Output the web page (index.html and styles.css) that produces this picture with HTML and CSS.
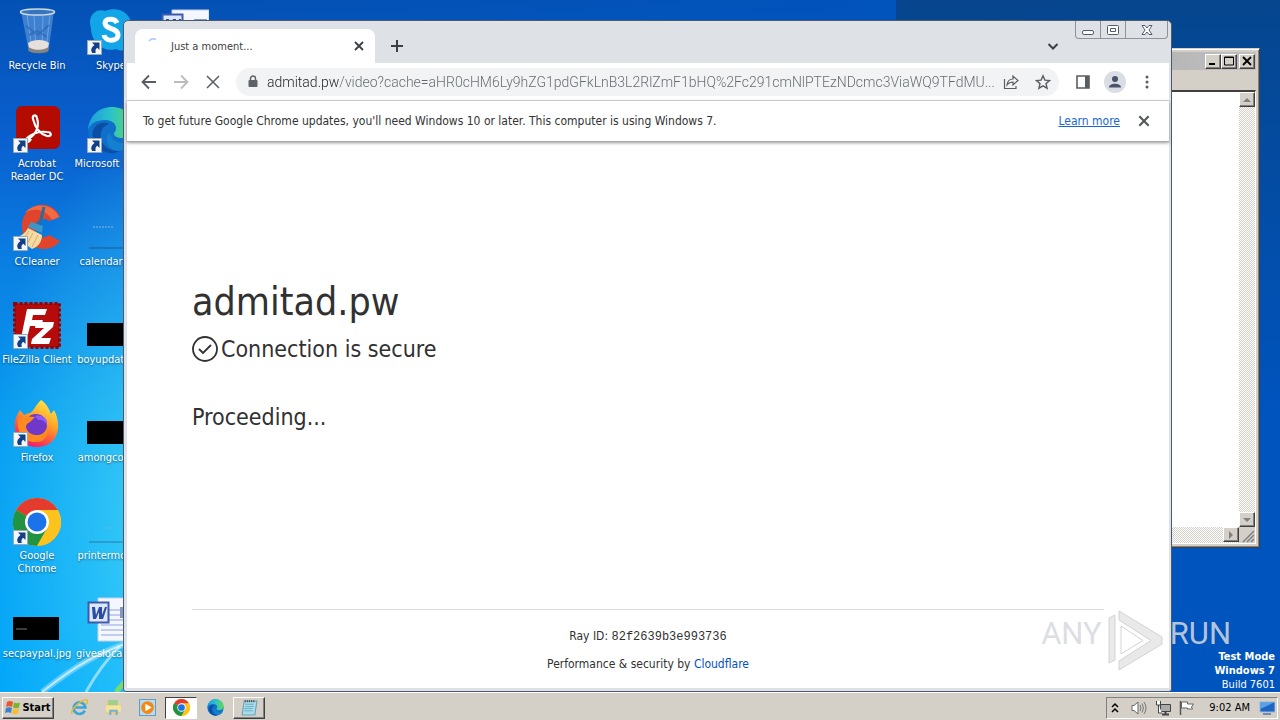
FILE: index.html
```html
<!DOCTYPE html>
<html lang="en">
<head>
    <meta charset="UTF-8">
    <meta name="viewport" content="width=device-width, initial-scale=1.0">
    <title>Just a moment...</title>
    <link rel="stylesheet" href="styles.css">
</head>
<body>
    <!-- shared icons -->
    <svg class="defs" width="0" height="0">
        <symbol id="shortcut" viewBox="0 0 15 15">
            <path d="M.500.500h14v14H.500z" fill="#f3f7fb" stroke="#9aa9b8"/>
            <path d="M5 2.500h7.500V10L10.300 7.800C8.400 9 8.200 10.500 8.700 13H5.300C3.500 10.500 4 7.500 7.500 5z" fill="#123f86"/>
        </symbol>
        <symbol id="chrome" viewBox="0 0 48 48">
            <circle cx="24" cy="24" r="24" fill="#fbc116"/>
            <path d="M24 24 3.200 12A24 24 0 0 1 44.800 12z" fill="#e33b2e"/>
            <path d="M3.200 12A24 24 0 0 0 24 48L34.400 30 24 24z" fill="#229342"/>
            <path d="M24 12h20.800A24 24 0 0 1 24 48l10.400-18z" fill="#fcc31e"/>
            <circle cx="24" cy="24" r="12" fill="#fff"/>
            <circle cx="24" cy="24" r="9.500" fill="#1a73e8"/>
        </symbol>
        <symbol id="edge" viewBox="0 0 48 48">
            <linearGradient id="edge-top"><stop stop-color="#1f9be0"/><stop offset=".5" stop-color="#2bc3c9"/><stop offset="1" stop-color="#62d858"/></linearGradient>
            <circle cx="24" cy="24" r="23" fill="#0f6fc9"/>
            <path d="M1 24C2 10 12 1 25 1c13 0 22 9 22 19 0 8-6 12-12 12-5 0-8-2-8-4s2-2 2-6c0-5-5-8-11-8C9 14 3 18 1 24z" fill="url(#edge-top)"/>
            <path d="M18 20c-6 5-6 14 0 20 4 4 10 6 16 4-5 4-12 4-18 1C5 39 3 27 8 21c4-5 10-5 14-3z" fill="#0b4ea3"/>
            <path d="M23 26c0 6 5 11 12 11 4 0 8-1 10-2-4 8-12 12-18 9-8-3-9-13-4-18z" fill="#1580d0"/>
        </symbol>
        <symbol id="close" viewBox="0 0 12 12">
            <path d="M2 2l8 8M10 2l-8 8" fill="none" stroke="currentColor" stroke-width="1.800"/>
        </symbol>
        <symbol id="word" viewBox="0 0 48 48">
            <path d="M11 2h37v43H11z" fill="#f4f7ff" stroke="#c6d0ea"/>
            <path d="M14 14h32M14 19h32M14 24h32M14 29h32M14 34h32M14 39h32" stroke="#8ca3dc"/>
            <path d="M33 11h13v11H33z" fill="#8796c0"/>
            <path d="M1.500 6.500h20v20h-20z" fill="#dde6fb" stroke="#3d5aab" stroke-width="2"/>
            <path d="M5 11h3l1 8 3-8h3v8l3-8h2l-4 12h-4v-7l-3 7H6z" fill="#2a4b9f"/>
        </symbol>
    </svg>

    <div class="desktop">
        <svg class="beams" viewBox="0 0 240 150" aria-hidden="true">
            <path d="M42 150C75 124 100 108 150 94" stroke="#fff" stroke-width="6" opacity=".3"/>
            <path d="M42 150C75 124 100 108 150 94" stroke="#fff" stroke-width="2" opacity=".6"/>
            <path d="M86 150C96 132 106 118 120 104" stroke="#fff" stroke-width="3" opacity=".5"/>
            <path d="M116 150l14-16" stroke="#8be14e" stroke-width="5" opacity=".8"/>
        </svg>

        <ul class="icons">
            <li>
                <svg class="icon" viewBox="0 0 48 48">
                    <path d="M8 3h33l-5 36c-1 5-20 5-21 0z" fill="#78aee8" opacity=".5"/>
                    <path d="M14 7l5 34M37 7l-4 34M21 8l2 33M30 8l-1 33" stroke="#b5d4f5" opacity=".4"/>
                    <path d="M13 18l12 9 11-10M16 27l8-4 10 6" fill="none" stroke="#2a62ad" stroke-width="2" opacity=".6"/>
                    <path d="M15 35c5-4 17-4 21 0l-1 5c-4 4-15 4-19 0z" fill="#e5e0dc"/>
                    <path d="M15 38c3 5 18 5 21 0l-.500 5c-3 3-16 3-20 0z" fill="#85837f"/>
                    <ellipse cx="24.500" cy="4" rx="17" ry="3" fill="#3974bd" stroke="#ccd9e5" stroke-width="1.500"/>
                </svg>
                <span>Recycle Bin</span>
            </li>
            <li>
                <svg class="icon" viewBox="0 0 48 48">
                    <rect x="3" y="0" width="44" height="43" rx="6" fill="#b30b00"/>
                    <path d="M13 34c9-4 14-12 11-22-1-4-5-3-4 1 2 8 7 15 14 17 5 1 5-4 0-4-8-1-16 2-21 7-3 4 3 4 5 0" fill="none" stroke="#fff" stroke-width="2.200"/>
                    <use href="#shortcut" x="0" y="32" width="15" height="15"/>
                </svg>
                <span>Acrobat Reader DC</span>
            </li>
            <li>
                <svg class="icon" viewBox="0 0 48 48">
                    <path d="M47 13l-11 4c-4-4-13-2-14 6-1 9 8 13 14 8l11 6C36 52 9 45 9 22 9 0 38-8 47 13z" fill="#e0442a"/>
                    <path d="M12 9C20-2 40-1 46 13l-7 3C33 5 21 3 12 9z" fill="#f16a44"/>
                    <path d="M31 3l-5 20" stroke="#246e9d" stroke-width="3"/>
                    <path d="M18 18l12 4-1 7-14-6z" fill="#3d96c8"/>
                    <path d="M15 24l14 7c0 7-4 12-10 14L3 33c6-1 9-4 12-9z" fill="#f5dba2"/>
                    <path d="M16 27l-6 9m10-7-6 11m11-9-6 12" stroke="#d8ae67"/>
                    <use href="#shortcut" x="0" y="32" width="15" height="15"/>
                </svg>
                <span>CCleaner</span>
            </li>
            <li>
                <svg class="icon" viewBox="0 0 48 48">
                    <path d="M1.500 1.500h45v44h-45z" fill="#b60b0b" stroke="#8c0509" stroke-width="3" stroke-dasharray="3 2"/>
                    <path d="M14 7h20l-2 6H20l-1 5h11l-2 6H17l-3 12H8z" fill="#fff"/>
                    <path d="M23 20h18l-1 5-12 11h10l-2 6H18l1-5 12-11h-9z" fill="#fff"/>
                    <use href="#shortcut" x="0" y="32" width="15" height="15"/>
                </svg>
                <span>FileZilla Client</span>
            </li>
            <li>
                <svg class="icon" viewBox="0 0 48 48">
                    <linearGradient id="fox" x1=".8" y1="0" x2=".3" y2="1"><stop stop-color="#fff14c"/><stop offset=".45" stop-color="#ff9a27"/><stop offset=".8" stop-color="#ff3b4d"/><stop offset="1" stop-color="#e9197e"/></linearGradient>
                    <path d="M28 0c6 4 8 9 10 14l3-4c8 15 5 35-15 37C10 48 0 36 2 23c0-5 3-9 5-13l4 5 5-2c4 0 5-6 12-13z" fill="url(#fox)"/>
                    <circle cx="23" cy="25" r="11" fill="#7038c8"/>
                    <path d="M5 20c6-5 11-3 17-3l-5 5c-2 1-4 2-4 5 1 9 17 12 21 1 2 8-3 15-12 14C10 42 4 32 5 20z" fill="#ff8b20"/>
                    <path d="M22 16c8-2 13 3 12 10-2-5-5-7-9-6z" fill="#9059ff"/>
                    <use href="#shortcut" x="0" y="32" width="15" height="15"/>
                </svg>
                <span>Firefox</span>
            </li>
            <li>
                <svg class="icon" viewBox="0 0 48 48">
                    <use href="#chrome" width="48" height="48"/>
                    <use href="#shortcut" x="0" y="32" width="15" height="15"/>
                </svg>
                <span>Google Chrome</span>
            </li>
            <li>
                <svg class="icon" viewBox="0 0 48 48"><path d="M0 21h46v23H0z"/><path d="M3 33h11" stroke="#777"/></svg>
                <span>secpaypal.jpg</span>
            </li>
            <li>
                <svg class="icon" viewBox="0 0 48 48">
                    <path d="M4 20C0 8 9 0 18 3 34-3 48 8 44 25c5 12-6 21-15 16C16 45 4 34 4 20z" fill="#12a5e8"/>
                    <path d="M30 15c-2-5-12-5-12 0 0 7 13 4 13 12 0 7-13 7-14 0" fill="none" stroke="#fff" stroke-width="5"/>
                    <use href="#shortcut" x="0" y="32" width="15" height="15"/>
                </svg>
                <span>Skype</span>
            </li>
            <li>
                <svg class="icon" viewBox="0 0 48 48">
                    <use href="#edge" width="48" height="48"/>
                    <use href="#shortcut" x="0" y="32" width="15" height="15"/>
                </svg>
                <span class="line">Microsoft Edge</span>
            </li>
            <li>
                <svg class="icon" viewBox="0 0 48 48"><path d="M6 23h21" stroke="#82b9e8" stroke-dasharray="2 1"/><path d="M2 44h46" stroke="#185c94"/></svg>
                <span class="line">calendarc.rtf</span>
            </li>
            <li>
                <svg class="icon" viewBox="0 0 48 48"><path d="M0 21h46v23H0z"/></svg>
                <span class="line">boyupdate.rtf</span>
            </li>
            <li>
                <svg class="icon" viewBox="0 0 48 48"><path d="M0 21h46v23H0z"/></svg>
                <span class="line">amongcon.rtf</span>
            </li>
            <li>
                <svg class="icon" viewBox="0 0 48 48"><path d="M16 30h9" stroke="#63b9d9" stroke-dasharray="2 1"/><path d="M2 44h46" stroke="#267da4"/></svg>
                <span class="line">printermo.jpg</span>
            </li>
            <li>
                <svg class="icon" viewBox="0 0 48 48"><use href="#word" width="48" height="48"/></svg>
                <span class="line">giveslocal.doc</span>
            </li>
            <li>
                <svg class="icon" viewBox="0 0 48 48"><use href="#word" width="48" height="48"/></svg>
            </li>
        </ul>

        <div class="build">
            <b>Test Mode</b>
            <b>Windows 7</b>
            <span>Build 7601</span>
        </div>

        <!-- classic window at the back -->
        <section class="notepad">
            <div class="notepad-title">
                <button class="classic" aria-label="Minimize"><svg viewBox="0 0 12 10"><path d="M2 8h6" stroke="#000" stroke-width="2"/></svg></button>
                <button class="classic" aria-label="Maximize"><svg viewBox="0 0 12 10"><path d="M1.500 1v8h9V1zM1 1.500h10" fill="none" stroke="#000"/></svg></button>
                <button class="classic gap" aria-label="Close"><svg viewBox="0 0 12 10"><path d="M2 1l8 8M10 1l-8 8" stroke="#000" stroke-width="1.800"/></svg></button>
            </div>
            <div class="notepad-menu"></div>
            <div class="notepad-client">
                <div class="sheet"></div>
                <div class="scroll vertical">
                    <button class="classic" aria-label="Scroll up"><svg viewBox="0 0 12 10"><path d="M2 7h8L6 3z" fill="#808080"/></svg></button>
                    <button class="classic" aria-label="Scroll down"><svg viewBox="0 0 12 10"><path d="M2 3h8L6 7z" fill="#808080"/></svg></button>
                </div>
                <div class="scroll horizontal">
                    <button class="classic" aria-label="Scroll right"><svg viewBox="0 0 12 10"><path d="M4 1v8l4-4z" fill="#808080"/></svg></button>
                </div>
                <svg class="grip" viewBox="0 0 16 16"><path d="M4 15L15 4M8 15l7-7M12 15l3-3" stroke="#808080" stroke-width="1.500"/></svg>
            </div>
        </section>

        <!-- browser -->
        <section class="browser">
            <div class="caption">
                <button aria-label="Minimize"><svg viewBox="0 0 14 12"><rect x="1.500" y="6.500" width="11" height="4" rx="1.500"/></svg></button>
                <button aria-label="Maximize"><svg viewBox="0 0 14 12"><rect x="1.500" y="1.500" width="11" height="9" rx="1"/><path d="M4.500 4.500h5v3h-5z"/></svg></button>
                <button class="wide" aria-label="Close"><svg viewBox="0 0 14 12"><path d="M2 1.500h3l2 2.500 2-2.500h3L9 6l3 4.500H9L7 8l-2 2.500H2L5 6z"/></svg></button>
            </div>
            <div class="tabs">
                <div class="tab">
                    <svg class="spinner" viewBox="0 0 16 16"><path d="M3 3C5 1 8 .500 10 1.500" fill="none" stroke="#a9c7fa" stroke-width="1.500"/></svg>
                    <span>Just a moment...</span>
                    <button aria-label="Close tab"><svg width="12" height="12"><use href="#close"/></svg></button>
                </div>
                <button class="new-tab" aria-label="New tab"><svg width="14" height="14" viewBox="0 0 14 14"><path d="M7 1v12M1 7h12" stroke="currentColor" stroke-width="2"/></svg></button>
                <button class="tab-search" aria-label="Search tabs"><svg width="12" height="12" viewBox="0 0 12 12"><path d="M1.500 4L6 8.500 10.500 4" fill="none" stroke="currentColor" stroke-width="2"/></svg></button>
            </div>

            <div class="toolbar">
                <button aria-label="Back"><svg width="16" height="16" viewBox="0 0 16 16"><path d="M15 8H2M8 1.500L1.500 8 8 14.500" fill="none" stroke="currentColor" stroke-width="1.800"/></svg></button>
                <button class="off" aria-label="Forward"><svg width="16" height="16" viewBox="0 0 16 16"><path d="M1 8h13M8 1.500L14.500 8 8 14.500" fill="none" stroke="currentColor" stroke-width="1.800"/></svg></button>
                <button aria-label="Stop"><svg width="16" height="16" viewBox="0 0 16 16"><path d="M2 2l12 12M14 2L2 14" stroke="currentColor" stroke-width="1.500"/></svg></button>
                <div class="omnibox">
                    <svg width="12" height="14" viewBox="0 0 12 14"><rect x="1.500" y="5" width="9" height="7" rx="1" fill="#5f6368"/><path d="M3.500 6V3.500a2.500 2.500 0 0 1 5 0V6" fill="none" stroke="#5f6368" stroke-width="1.500"/></svg>
                    <input type="text" aria-label="Address" value="admitad.pw/video?cache=aHR0cHM6Ly9hZG1pdGFkLnB3L2RlZmF1bHQ%2Fc291cmNlPTEzNDcmc3ViaWQ9TFdMU...">
                    <button aria-label="Share"><svg width="16" height="16" viewBox="0 0 16 16"><path d="M1.500 5v9.500H13V12M4 11c.500-4 2.500-6 6-6V2l5 4.500-5 4.500V8C7.500 8 5.500 9 4 11z" fill="none" stroke="currentColor" stroke-width="1.200"/></svg></button>
                    <button aria-label="Bookmark"><svg width="16" height="16" viewBox="0 0 16 16"><path d="M8 1.800l1.900 4.300 4.700.400-3.600 3.100 1.100 4.600L8 11.800l-4.100 2.400L5 9.600 1.400 6.500l4.700-.400z" fill="none" stroke="currentColor" stroke-width="1.400"/></svg></button>
                </div>
                <button aria-label="Side panel"><svg width="16" height="16" viewBox="0 0 16 16"><path d="M2 2h12v12H2z" fill="none" stroke="currentColor" stroke-width="1.600"/><path d="M10 2h4v12h-4z" fill="currentColor"/></svg></button>
                <button class="avatar" aria-label="Profile"><svg width="14" height="14" viewBox="0 0 14 14"><circle cx="7" cy="4" r="3" fill="#4a5168"/><path d="M1 12.500c0-5 12-5 12 0z" fill="#4a5168"/></svg></button>
                <button aria-label="Menu"><svg width="16" height="16" viewBox="0 0 16 16" fill="currentColor"><circle cx="8" cy="3" r="1.500"/><circle cx="8" cy="8" r="1.500"/><circle cx="8" cy="13" r="1.500"/></svg></button>
            </div>

            <div class="infobar">
                <span>To get future Google Chrome updates, you'll need Windows 10 or later. This computer is using Windows 7.</span>
                <a href="#">Learn more</a>
                <button aria-label="Dismiss"><svg width="14" height="14"><use href="#close"/></svg></button>
            </div>

            <div class="page">
                <main>
                    <h1>admitad.pw</h1>
                    <h2>
                        <svg width="26" height="26" viewBox="0 0 26 26"><circle cx="13" cy="13" r="12" fill="none" stroke="#313131" stroke-width="1.800"/><path d="M7 13l4 4 8-8" fill="none" stroke="#313131" stroke-width="1.800"/></svg>
                        <span>Connection is secure</span>
                    </h2>
                    <p>Proceeding...</p>
                </main>
                <footer>
                    <div>Ray ID: <code>82f2639b3e993736</code></div>
                    <div>Performance &amp; security by <a href="#">Cloudflare</a></div>
                </footer>
            </div>
        </section>

        <div class="watermark" aria-hidden="true">
            <span>ANY</span>
            <svg width="60" height="64" viewBox="0 0 60 64">
                <path d="M3 10l6-3v45l-6 3zM13 3l43 26v7L13 62v-9l32-20.500L13 12z" fill="#e9e9e9" stroke="#d3d3d3"/>
                <path d="M15 18v28l22-13.500z" fill="#fff" stroke="#d3d3d3"/>
            </svg>
            <span>RUN</span>
        </div>
    </div>

    <nav class="taskbar">
        <button class="start">
            <svg width="16" height="16" viewBox="0 0 16 16"><path d="M2 2q3-2 6 0L7 7Q4 5.500 1 7z" fill="#e8582a"/><path d="M9 2.500q3 1.500 6 0L14 7.500q-3 1.500-6 0z" fill="#78b52c"/><path d="M1 8q3-1.500 6 0L6 13q-3-1.500-6 0z" fill="#3c80d0"/><path d="M8 8.500q3 1.500 6 0L13 13.500q-3 1.500-6 0z" fill="#f8bd2b"/></svg>
            Start
        </button>
        <div class="tasks">
            <button aria-label="Internet Explorer"><svg viewBox="0 0 16 16"><path d="M13 11A5.500 5.500 0 1 1 13.500 8H4" fill="none" stroke="#3aa5dd" stroke-width="2.500"/><path d="M1 14C-1 10 10 0 15 1c1 1 0 3-1 4" fill="none" stroke="#e8b932" stroke-width="1.500"/></svg></button>
            <button aria-label="Explorer"><svg viewBox="0 0 16 16"><path d="M1 3h5l1 1h7v10H1z" fill="#ecd06f"/><path d="M3 1h9v5H3z" fill="#9fcf8f"/><path d="M1 6h14v6H1z" fill="#f7e39b"/><path d="M4 15v-5h8v5h-2v-3H6v3z" fill="#6fb0df"/></svg></button>
            <button aria-label="Media Player"><svg viewBox="0 0 16 16"><path d="M.500.500h15v15H.500z" fill="#b9dcf5" stroke="#669cc7"/><circle cx="8" cy="8" r="6" fill="#f28a12"/><path d="M6 4.500v7L12 8z" fill="#fff"/></svg></button>
            <button class="active" aria-label="Google Chrome"><svg viewBox="0 0 48 48"><use href="#chrome"/></svg></button>
            <button aria-label="Microsoft Edge"><svg viewBox="0 0 48 48"><use href="#edge"/></svg></button>
            <button class="open" aria-label="Notepad"><svg viewBox="0 0 16 16"><path d="M3 2h12l-2 13H1z" fill="#a9dbe8" stroke="#6ba2b4"/><path d="M4 5h8M4 7h8M3 9h8M3 11h8" stroke="#6cb4c8"/><path d="M4 1v2m2-2v2m2-2v2m2-2v2m2-2v2" stroke="#555"/></svg></button>
        </div>
        <div class="tray">
            <svg viewBox="0 0 16 16"><path d="M5 7l3-3 3 3M5 12l3-3 3 3" fill="none" stroke="#000" stroke-width="1.500"/></svg>
            <svg viewBox="0 0 16 16"><path d="M1 5.500h2L7 2v12l-4-3.500H1z" fill="#fff" stroke="#666"/><path d="M9 5q2 3 0 6M11 3.500q3 4.500 0 9M13 2q4 6 0 12" fill="none" stroke="#777"/></svg>
            <svg viewBox="0 0 16 16"><path d="M5.500 4.500h10v7h-10z" fill="#aaa" stroke="#444"/><path d="M7 14.500h7M10.500 12v2" stroke="#444" stroke-width="2"/><path d="M1.500 1v4h4V1M3.500 5v8H7" fill="#fff" stroke="#444"/></svg>
            <svg viewBox="0 0 16 16"><path d="M1.500 1v14" stroke="#555" stroke-width="1.500"/><path d="M2.500 2h6v2h6l-2 3 1 2H8.500V8h-6z" fill="#fff" stroke="#666"/></svg>
            <time>9:02 AM</time>
            <svg viewBox="0 0 16 16"><path d="M1 2h15v10H1z" fill="#1e65c4" stroke="#9db7d5"/><path d="M1 2h15L1 9z" fill="#5da2e6"/><path d="M4 14h8" stroke="#758aa8" stroke-width="2"/></svg>
        </div>
    </nav>
</body>
</html>
```
FILE: styles.css
```css
* {
    box-sizing: border-box;
}

body {
    margin: 0;
    height: 100vh;
    display: flex;
    flex-direction: column;
    overflow: hidden;
    font-family: "DejaVu Sans Condensed", "Noto Sans", sans-serif;
    font-size: 11px;
    color: #333;
}

button {
    display: flex;
    align-items: center;
    justify-content: center;
    padding: 0;
    border: 0;
    background: none;
    font: inherit;
    color: inherit;
}

svg {
    flex: none;
}

.defs {
    position: absolute;
}

/* desktop */
.desktop {
    flex: 1;
    min-height: 0;
    position: relative;
    overflow: hidden;
    background:
        radial-gradient(ellipse 200px 400px at 180px 520px, rgba(80, 225, 250, 0.8), rgba(80, 220, 250, 0) 100%),
        linear-gradient(180deg, rgba(10, 60, 110, 0.6), rgba(0, 60, 130, 0) 60%) right / 30% 100% no-repeat,
        linear-gradient(90deg, rgba(0, 80, 185, 0) 15%, rgba(0, 84, 190, 1) 85%),
        linear-gradient(180deg, #0451b4 0%, #0a60cf 20%, #0a82e4 40%, #059bf0 62%, #02a7fa 100%);
}

.beams {
    position: absolute;
    left: 0;
    bottom: 0;
    width: 240px;
    height: 150px;
    fill: none;
}

.icons {
    display: grid;
    grid-auto-flow: column;
    grid-template-rows: repeat(7, 98px);
    grid-auto-columns: 74px;
    width: 232px;
    margin: 0;
    padding: 8px 0 0;
    list-style: none;
}

.icons li {
    display: flex;
    flex-direction: column;
    align-items: center;
    gap: 3px;
    line-height: 13px;
    color: #fff;
    text-align: center;
    text-shadow: 0 1px 2px rgba(0, 0, 0, 0.5);
}

.icon {
    width: 48px;
    height: 48px;
}

.line {
    white-space: nowrap;
}

.build {
    position: absolute;
    right: 5px;
    bottom: 0;
    display: flex;
    flex-direction: column;
    line-height: 14px;
    text-align: right;
    color: #fff;
}

/* classic window */
.notepad {
    position: absolute;
    top: 48px;
    right: 20px;
    bottom: 144px;
    width: 600px;
    display: flex;
    flex-direction: column;
    padding: 3px;
    background: #d4d0c8;
    border: 1px solid #d4d0c8;
    border-right-color: #404040;
    border-bottom-color: #404040;
    box-shadow: inset 1px 1px #fff, inset -1px -1px #808080;
}

.notepad-title {
    display: flex;
    align-items: center;
    justify-content: flex-end;
    height: 18px;
    padding-right: 1px;
    background: linear-gradient(90deg, #808080, #c0c0c0);
}

.notepad-menu {
    height: 20px;
}

.classic {
    width: 16px;
    height: 15px;
    background: #d4d0c8;
    border: 1px solid #fff;
    border-right-color: #404040;
    border-bottom-color: #404040;
    box-shadow: inset -1px -1px #808080;
}

.classic svg {
    width: 12px;
    height: 10px;
}

.gap {
    margin-left: 2px;
}

.notepad-client {
    flex: 1;
    display: grid;
    grid-template-columns: 1fr 16px;
    grid-template-rows: 1fr 16px;
    border: 1px solid #fff;
    border-top: 2px solid #404040;
}

.sheet {
    background: #fff;
}

.scroll {
    display: flex;
    background: repeating-conic-gradient(#fff 0 25%, #d4d0c8 0 50%) 0 0 / 2px 2px;
}

.scroll.vertical {
    flex-direction: column;
    justify-content: space-between;
}

.scroll.horizontal {
    justify-content: flex-end;
}

/* browser window */
.browser {
    position: absolute;
    top: 20px;
    left: 123px;
    right: 108px;
    bottom: 0;
    display: flex;
    flex-direction: column;
    padding: 0 2px 3px 3px;
    background: #dee1e6;
    border: 1px solid #4d5a6b;
    border-radius: 5px 5px 3px 3px;
}

.caption {
    position: absolute;
    top: 0;
    right: 3px;
    display: flex;
    height: 18px;
    border: 1px solid #8d939c;
    border-top: 0;
    border-radius: 0 0 4px 4px;
}

.caption button {
    width: 25px;
    border-right: 1px solid #8d939c;
}

.caption .wide {
    width: 41px;
    border-right: 0;
}

.caption svg {
    width: 14px;
    height: 12px;
    fill: #fff;
    stroke: #545b68;
}

.tabs {
    display: flex;
    align-items: flex-end;
    height: 42px;
    padding: 0 8px;
    color: #3c4043;
}

.tab {
    display: flex;
    align-items: center;
    gap: 9px;
    width: 240px;
    height: 34px;
    padding: 0 10px 0 11px;
    background: #fff;
    border-radius: 8px 8px 0 0;
}

.tab span {
    flex: 1;
}

.spinner {
    width: 16px;
    height: 16px;
}

.new-tab {
    width: 28px;
    height: 34px;
    margin-left: 8px;
}

.tab-search {
    width: 28px;
    height: 34px;
    margin-left: auto;
    margin-right: 94px;
}

.toolbar {
    display: flex;
    align-items: center;
    gap: 8px;
    height: 38px;
    padding: 0 10px;
    background: #fff;
    border-bottom: 1px solid #d5d7db;
    color: #5a5d62;
}

.toolbar button {
    width: 24px;
    height: 24px;
}

.toolbar .off {
    color: #babcbe;
}

.omnibox {
    flex: 1;
    display: flex;
    align-items: center;
    height: 28px;
    margin-left: 3px;
    margin-right: 4px;
    padding: 0 4px 0 11px;
    background: #f1f3f4;
    border-radius: 14px;
}

.omnibox input {
    flex: 1;
    min-width: 0;
    margin-left: 8px;
    padding: 0;
    border: 0;
    outline: 0;
    font-family: Roboto, sans-serif;
    font-size: 14px;
    font-weight: 300;
    /* host name dark, the rest of the address grey */
    background: linear-gradient(90deg, #202124 72px, #63676b 72px);
    -webkit-background-clip: text;
    background-clip: text;
    color: transparent;
}

.omnibox button + button {
    margin-left: 8px;
}

.toolbar .avatar {
    width: 22px;
    height: 22px;
    margin: 0 1px;
    border-radius: 50%;
    background: #dadde3;
}

.infobar {
    display: flex;
    align-items: center;
    height: 41px;
    padding: 0 16px;
    background: #fff;
    border-bottom: 1px solid #aaa;
    box-shadow: 0 1px 3px rgba(0, 0, 0, 0.4);
    font-size: 12px;
    z-index: 1;
}

.infobar span {
    flex: 1;
}

.infobar a {
    color: #1a67c9;
}

.infobar button {
    width: 18px;
    margin-left: 15px;
    color: #54575c;
}

.page {
    flex: 1;
    min-height: 0;
    display: flex;
    flex-direction: column;
    padding: 0 65px;
    background: #fff;
    color: #313131;
}

.page main {
    flex: 1;
    padding-top: 130px;
}

.page h1,
.page h2,
.page p {
    margin: 0;
    font-weight: 400;
}

.page h1 {
    font-size: 39px;
    line-height: 59px;
}

.page h2 {
    display: flex;
    align-items: center;
    gap: 3px;
    margin-bottom: 32px;
    font-size: 23px;
    line-height: 36px;
}

.page p {
    font-size: 23px;
    line-height: 36px;
}

.page footer {
    padding: 17px 0 15px;
    border-top: 1px solid #d9d9d9;
    font-size: 12px;
    line-height: 18px;
    text-align: center;
}

.page footer div + div {
    margin-top: 9px;
}

.page code {
    font-family: "Liberation Mono", monospace;
    font-size: 12px;
}

.page footer a {
    color: #0051c3;
    text-decoration: none;
}

.watermark {
    position: absolute;
    right: 49px;
    bottom: 20px;
    display: flex;
    align-items: center;
    gap: 4px;
    font-family: Roboto, sans-serif;
    font-size: 31px;
    line-height: 24px;
    color: rgba(214, 217, 222, 0.85);
    pointer-events: none;
}

.watermark span {
    padding-bottom: 12px;
}

/* taskbar */
.taskbar {
    display: flex;
    align-items: center;
    height: 28px;
    padding: 2px 2px 0;
    background: #d4d0c8;
    border-top: 1px solid #fff;
    color: #000;
}

.start,
.open {
    border: 1px solid #fff;
    border-right-color: #404040;
    border-bottom-color: #404040;
    box-shadow: inset -1px -1px #808080;
}

.start {
    width: 52px;
    height: 22px;
    gap: 1px;
    font-weight: 700;
}

.tasks {
    display: flex;
    align-items: center;
    gap: 2px;
    margin-left: 9px;
}

.tasks button {
    width: 32px;
    height: 22px;
}

.tasks svg {
    width: 17px;
    height: 17px;
}

.tasks .active {
    background: #fff;
    border: 1px solid #404040;
    border-right-color: #fff;
    border-bottom-color: #fff;
}

.tray {
    display: flex;
    align-items: center;
    gap: 8px;
    height: 22px;
    margin-left: auto;
    padding: 0 2px 0 0;
    border: 1px solid #808080;
    border-right-color: #fff;
    border-bottom-color: #fff;
}

.tray svg {
    width: 16px;
    height: 16px;
}

.tray time {
    padding: 0 1px 0 6px;
}
```
